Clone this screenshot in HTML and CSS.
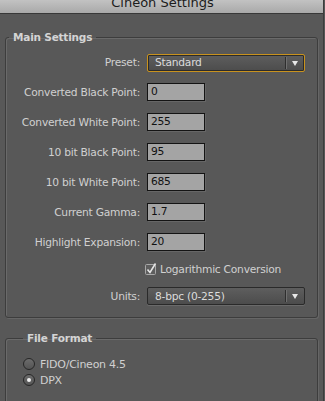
FILE: index.html
```html
<!DOCTYPE html>
<html lang="en">

<head>
    <meta charset="UTF-8">
    <meta name="viewport" content="width=device-width, initial-scale=1.0">
    <title>Cineon Settings</title>
    <link rel="stylesheet" href="styles.css">
</head>

<body>
    <div class="window">
        <div class="titlebar">
            <div class="title">Cineon Settings</div>
        </div>

        <fieldset class="group main-group">
            <legend>Main Settings</legend>
            <div class="rows">
                <label class="lbl">Preset:</label>
                <div class="select focused">
                    <span class="select-text">Standard</span>
                    <span class="select-sep"></span>
                    <span class="select-arrow"></span>
                </div>

                <label class="lbl">Converted Black Point:</label>
                <div class="field">0</div>

                <label class="lbl">Converted White Point:</label>
                <div class="field">255</div>

                <label class="lbl">10 bit Black Point:</label>
                <div class="field">95</div>

                <label class="lbl">10 bit White Point:</label>
                <div class="field">685</div>

                <label class="lbl">Current Gamma:</label>
                <div class="field">1.7</div>

                <label class="lbl">Highlight Expansion:</label>
                <div class="field">20</div>

                <span></span>
                <div class="check">
                    <svg class="check-box" width="14" height="14" viewBox="0 0 14 14">
                        <rect x="1.5" y="2.5" width="10" height="10" rx="1" fill="#5e5e5e" stroke="#a8a8a8" />
                        <path d="M3.5 7.5 L6 10.5 L11.5 1.5" fill="none" stroke="#e6e6e6" stroke-width="1.6" />
                    </svg>
                    <span>Logarithmic Conversion</span>
                </div>

                <label class="lbl">Units:</label>
                <div class="select">
                    <span class="select-text">8-bpc (0-255)</span>
                    <span class="select-sep"></span>
                    <span class="select-arrow"></span>
                </div>
            </div>
        </fieldset>

        <fieldset class="group format-group">
            <legend>File Format</legend>
            <div class="radio"><span class="dot"></span>FIDO/Cineon 4.5</div>
            <div class="radio"><span class="dot on"></span>DPX</div>
        </fieldset>
    </div>
</body>

</html>
```

FILE: styles.css
```css
body {
    margin: 0;
    background: #575757;
    font-family: "DejaVu Sans", sans-serif;
    font-size: 10.7px;
    letter-spacing: -0.25px;
    color: #d0d0d0;
    overflow: hidden;
}

.window {
    width: 323px;
    height: 401px;
    border-right: 1px solid #3c3c3c;
    background: #585858;
    overflow: hidden;
}

.titlebar {
    height: 13px;
    overflow: hidden;
    background: linear-gradient(#c2c2c2, #a9a9a9);
    border-bottom: 1px solid #383838;
    text-align: center;
}

.title {
    margin-top: -4px;
    margin-left: 2px;
    font-size: 13px;
    line-height: 13px;
    letter-spacing: 0;
    color: #1c1c1c;
}

.group {
    margin: 0 5px 0 5px;
    padding: 0 0 0 3px;
    border: 1px solid #3d3d3d;
    border-radius: 3px;
    box-shadow: inset 1px 1px 0 #6a6a6a, 1px 1px 0 #666;
}

.group legend {
    padding: 0 4px;
    font-weight: bold;
    font-size: 10.5px;
    letter-spacing: -0.2px;
    line-height: 13px;
    color: #d4d4d4;
}

.main-group {
    margin-top: 17px;
    padding-top: 9px;
    padding-bottom: 12px;
}

.rows {
    display: grid;
    grid-template-columns: 131px 158px;
    grid-template-rows: 18px repeat(6, 18px) 12px 18px;
    row-gap: 12px;
    column-gap: 7px;
    align-items: center;
}

.rows > :first-child,
.rows > :nth-child(2) {
    margin-bottom: -1px;
}

.lbl {
    text-align: right;
    white-space: nowrap;
}

.field {
    height: 16px;
    border: 1px solid #141414;
    background: #a4a4a4;
    color: #111;
    line-height: 16px;
    padding-left: 3px;
    box-sizing: content-box;
    width: 53px;
    box-shadow: 1px 1px 0 #666;
}

.select {
    height: 16px;
    border: 1px solid #2a2a2a;
    border-radius: 2px;
    background: linear-gradient(#5e5e5e, #4c4c4c);
    display: flex;
    align-items: center;
    color: #dcdcdc;
    box-shadow: 0 1px 0 #6a6a6a;
}

.select.focused {
    border-color: #c8921e;
    box-shadow: inset 0 0 0 1px #2b2b2b;
}

.select-text {
    flex: 1;
    padding-left: 7px;
}

.select-sep {
    width: 1px;
    height: 12px;
    background: #2e2e2e;
    border-right: 1px solid #707070;
}

.select-arrow {
    width: 0;
    height: 0;
    margin: 1px 6px 0 5px;
    border-left: 3.5px solid transparent;
    border-right: 3.5px solid transparent;
    border-top: 5px solid #e8e8e8;
}

.check {
    display: flex;
    align-items: center;
    gap: 2px;
    margin-left: -3px;
    white-space: nowrap;
}

.check-box {
    display: block;
}

.format-group {
    margin-top: 14px;
    padding-top: 11px;
    padding-left: 17px;
    height: 80px;
}

.radio {
    display: flex;
    align-items: center;
    gap: 5px;
    height: 16px;
    font-size: 11px;
}

.dot {
    width: 10px;
    height: 10px;
    border-radius: 50%;
    border: 1px solid #262626;
    background: linear-gradient(#6c6c6c, #545454);
    display: flex;
    align-items: center;
    justify-content: center;
}

.dot.on::after {
    content: "";
    width: 4px;
    height: 4px;
    border-radius: 50%;
    background: #f0f0f0;
}
```
